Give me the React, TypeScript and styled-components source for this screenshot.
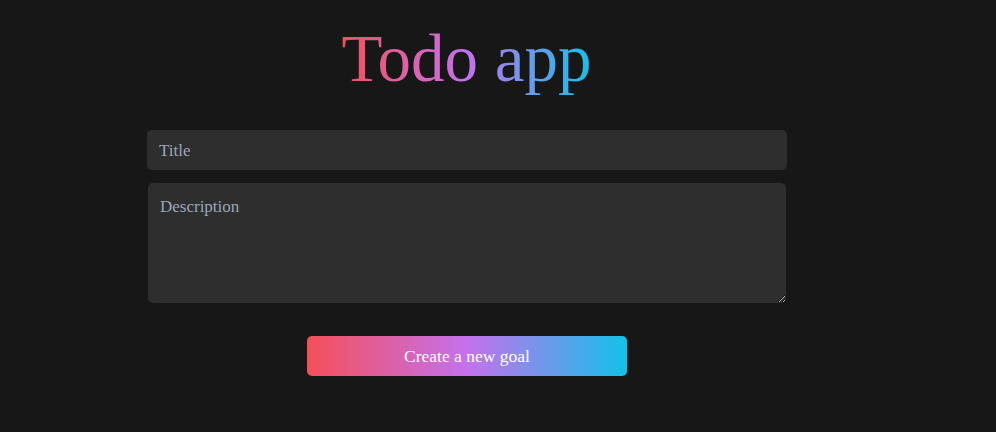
import React from "react";
import styled, { createGlobalStyle } from "styled-components";

const Global = createGlobalStyle`
  html, body { margin: 0; padding: 0; background: #171717; }
  body { font-family: "Liberation Serif", serif; }
  * { box-sizing: border-box; }
`;

const Page = styled.div`
  min-height: 432px;
  background: #171717;
  padding: 0 0 0 147px;
`;

const Column = styled.div`
  width: 640px;
  display: flex;
  flex-direction: column;
  align-items: center;
`;

const Heading = styled.h1`
  margin: 16px 0 0 -1px;
  font-family: "Liberation Serif", serif;
  font-weight: 400;
  font-size: 67px;
  line-height: 84px;
  background: linear-gradient(90deg, #f64f59, #c471ed, #12c2e9);
  -webkit-background-clip: text;
  background-clip: text;
  color: transparent;
`;

const Form = styled.form`
  width: 640px;
  margin-top: 30px;
  display: flex;
  flex-direction: column;
  align-items: center;
`;

const fieldBase = `
  border: none;
  outline: none;
  background: #2e2e2e;
  color: #e5e5e5;
  border-radius: 5px;
  font-family: "Liberation Serif", serif;
  font-size: 17px;
  &::placeholder { color: #9aa6b8; }
`;

const TitleInput = styled.input`
  ${fieldBase}
  width: 640px;
  height: 40px;
  padding: 2px 12px 0;
`;

const DescArea = styled.textarea`
  ${fieldBase}
  width: 638px;
  height: 120px;
  margin-top: 13px;
  padding: 14px 12px 13px;
  resize: both;
`;

const Button = styled.button`
  margin-top: 33px;
  width: 320px;
  height: 40px;
  border: none;
  border-radius: 5px;
  background: linear-gradient(90deg, #f64f59, #c471ed, #12c2e9);
  color: #ffffff;
  font-family: "Liberation Serif", serif;
  font-size: 17.5px;
  cursor: pointer;
`;

export default function App() {
  return (
    <>
      <Global />
      <Page>
        <Column>
          <Heading>Todo app</Heading>
          <Form onSubmit={(e) => e.preventDefault()}>
            <TitleInput placeholder="Title" />
            <DescArea placeholder="Description" />
            <Button type="submit">Create a new goal</Button>
          </Form>
        </Column>
      </Page>
    </>
  );
}
